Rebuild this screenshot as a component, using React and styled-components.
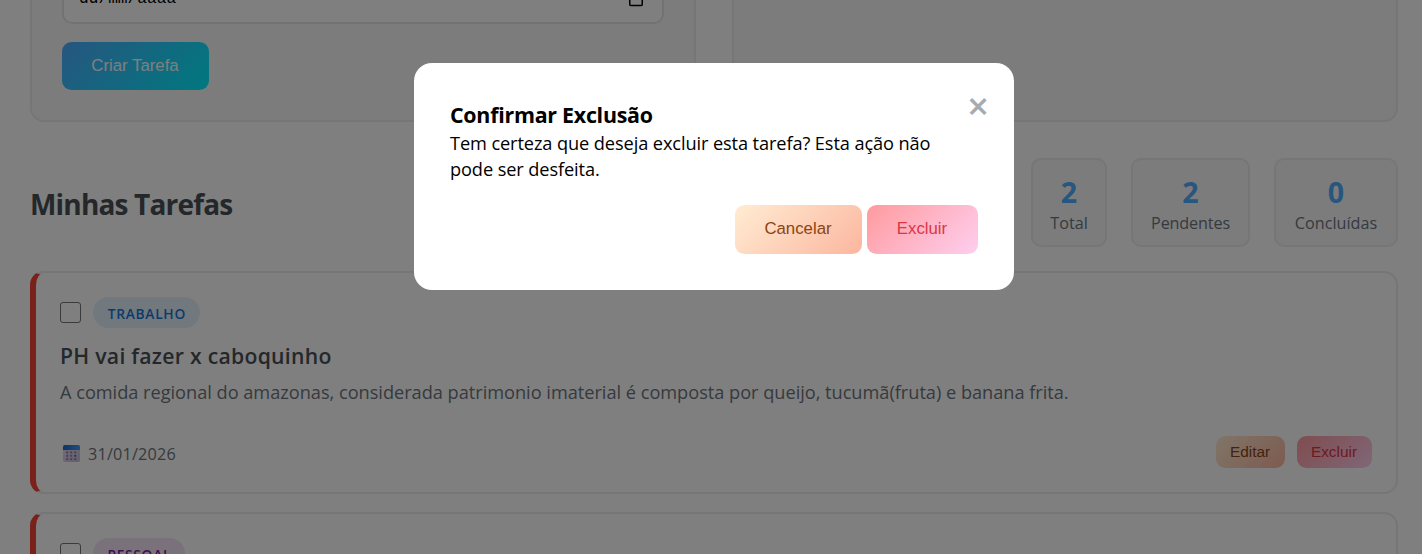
import React from "react";
import styled, { createGlobalStyle } from "styled-components";

const GlobalStyle = createGlobalStyle`
  * { box-sizing: border-box; }
  html, body { margin: 0; padding: 0; background: #fff; overflow: hidden; }
  body { font-family: "Open Sans", "Noto Sans", sans-serif; color: #000; }
  h2, h3, p { margin: 0; }
`;

const Page = styled.div`
  height: 554px;
  padding: 0 24px 0 30px;
  overflow: hidden;
  background: #fff;
`;

const Panels = styled.div`
  display: grid;
  grid-template-columns: 1fr 1fr;
  gap: 36px;
  width: 1368px;
  height: 182px;
  margin-top: -60px;
`;

const Panel = styled.section`
  display: flex;
  flex-direction: column;
  align-items: flex-start;
  justify-content: flex-end;
  gap: 18px;
  padding: 30px;
  border: 2px solid #e9ecef;
  border-radius: 14px;
  background: #f8f9fa;
`;

const DateField = styled.div`
  display: flex;
  align-items: center;
  justify-content: space-between;
  width: 602px;
  height: 51px;
  padding: 0 18px 0 15px;
  border: 2px solid #e1e5e9;
  border-radius: 10px;
  background: #fff;
  font: 16.2px/20px "Liberation Mono", monospace;
`;

const variants = {
  primary: { bg: "linear-gradient(135deg, #4facfe 0%, #00f2fe 100%)", fg: "#fff" },
  warm: { bg: "linear-gradient(135deg, #ffecd2 0%, #fcb69f 100%)", fg: "#8b4513" },
  danger: { bg: "linear-gradient(135deg, #ff9a9e 0%, #fecfef 100%)", fg: "#dc3545" },
};

const Button = styled.button`
  width: ${(p) => p.$w}px;
  height: ${(p) => (p.$small ? 32 : p.$h || 49)}px;
  padding: 0 1px ${(p) => (p.$small || p.$h ? 0 : 2)}px 0;
  border: 0;
  border-radius: 9.6px;
  background: ${(p) => variants[p.$variant].bg};
  color: ${(p) => variants[p.$variant].fg};
  font: 400 ${(p) => (p.$small ? 15.4 : 16.8)}px/20px "Liberation Sans", Arial, sans-serif;
`;

const SectionHead = styled.header`
  display: flex;
  align-items: center;
  justify-content: space-between;
  width: 1368px;
  margin: 36px 0 24px;
`;

const SectionTitle = styled.h2`
  font-size: 28px;
  line-height: 40px;
  font-weight: 700;
  letter-spacing: -0.82px;
  color: #495057;
  padding-top: 2px;
`;

const Stats = styled.div`
  display: flex;
  gap: 24px;
`;

const Stat = styled.div`
  width: ${(p) => p.$w}px;
  height: 89px;
  padding-top: 15px;
  border: 2px solid #e9ecef;
  border-radius: 10px;
  background: #f8f9fa;
  text-align: center;
`;

const StatValue = styled.div`
  font-size: 28.6px;
  line-height: 34px;
  font-weight: 700;
  color: #4facfe;
`;

const StatLabel = styled.div`
  font-size: 16.2px;
  line-height: 29px;
  color: #6c757d;
  letter-spacing: ${(p) => p.$ls || 0}px;
`;

const Task = styled.article`
  width: 1368px;
  height: 223px;
  margin-bottom: 18px;
  padding: 24px 24px 24px 24px;
  border: 2px solid #e9ecef;
  border-left: 6px solid #f44336;
  border-radius: 14px;
  background: #fff;
`;

const TaskTop = styled.div`
  display: flex;
  align-items: center;
  gap: 12px;
  height: 31px;
`;

const Check = styled.span`
  width: 21px;
  height: 21px;
  border: 1px solid #767676;
  border-radius: 3px;
  background: #fff;
`;

const Tag = styled.span`
  width: ${(p) => p.$w}px;
  height: 31px;
  border-radius: 16px;
  background: ${(p) => p.$bg};
  color: ${(p) => p.$fg};
  font-size: 13.8px;
  line-height: 33px;
  font-weight: 600;
  letter-spacing: 0.7px;
  text-indent: 0.7px;
  text-align: center;
`;

const TaskTitle = styled.h3`
  margin-top: 11px;
  font-size: 21.2px;
  line-height: 34px;
  font-weight: 600;
  letter-spacing: 0.27px;
  color: #495057;
`;

const TaskText = styled.p`
  padding-top: 2px;
  font-size: 18.2px;
  line-height: 34px;
  letter-spacing: -0.02px;
  color: #6c757d;
`;

const TaskFoot = styled.div`
  display: flex;
  align-items: center;
  justify-content: space-between;
  height: 32px;
  margin-top: 27px;
`;

const Due = styled.div`
  display: flex;
  align-items: center;
  gap: 8px;
  padding: 3px 0 0 3px;
  color: #6c757d;
  font-size: 16.2px;
  line-height: 24px;
  letter-spacing: 0.2px;
`;

const Actions = styled.div`
  display: flex;
  gap: ${(p) => p.$gap}px;
  justify-content: flex-end;
`;

const Overlay = styled.div`
  position: fixed;
  inset: 0;
  display: flex;
  align-items: flex-start;
  justify-content: center;
  padding-top: 63px;
  background: rgba(0, 0, 0, 0.5);
`;

const Modal = styled.div`
  width: 600px;
  height: 227px;
  margin-left: 6px;
  padding: 36px;
  border-radius: 18px;
  background: #fff;
`;

const ModalHead = styled.div`
  display: flex;
  justify-content: space-between;
  height: 31px;
`;

const ModalTitle = styled.h3`
  font-size: 21.4px;
  line-height: 32px;
  font-weight: 700;
  letter-spacing: -0.26px;
`;

const Close = styled.span`
  width: 22px;
  margin-right: -11px;
  color: #aaa;
  font-size: 38px;
  line-height: 12px;
  font-weight: 600;
  text-align: center;
`;

const ModalText = styled.p`
  margin-bottom: 23px;
  font-size: 18.2px;
  line-height: 26px;
  letter-spacing: -0.1px;
`;

function PickerIcon() {
  return (
    <svg width="16" height="18" viewBox="0 0 16 18" fill="none" stroke="#000" strokeWidth="1.5">
      <rect x="1.75" y="3" width="12.5" height="12.5" rx="1" />
      <path d="M2 6h12M5 1v3M11 1v3" />
    </svg>
  );
}

function CalendarIcon() {
  return (
    <svg width="17" height="17" viewBox="0 0 17 17">
      <defs>
        <linearGradient id="calTop" x1="0" x2="1">
          <stop offset="0" stopColor="#2266cc" />
          <stop offset="1" stopColor="#39a0f5" />
        </linearGradient>
        <linearGradient id="calBody" x1="0" x2="1" y1="0" y2="1">
          <stop offset="0" stopColor="#e2dcee" />
          <stop offset="1" stopColor="#cbbbdc" />
        </linearGradient>
      </defs>
      <rect width="17" height="17" rx="2" fill="url(#calBody)" />
      <path d="M0 5V2A2 2 0 0 1 2 0h13A2 2 0 0 1 17 2V5z" fill="url(#calTop)" />
      <g fill="#8f84a8">
        {[4.2, 8.2, 12.2].map((x) =>
          [7.4, 10.8, 14.2].map((y) => (
            <circle key={x + "-" + y} cx={x} cy={y} r="1.15" fill={x > 12 && y > 10 && y < 11 ? "#1d83e8" : undefined} />
          ))
        )}
      </g>
    </svg>
  );
}

function TaskCard({ tag, title, text, date }) {
  return (
    <Task>
      <TaskTop>
        <Check />
        <Tag $w={tag.w} $bg={tag.bg} $fg={tag.fg}>{tag.name}</Tag>
      </TaskTop>
      {title && (
        <>
          <TaskTitle>{title}</TaskTitle>
          <TaskText>{text}</TaskText>
          <TaskFoot>
            <Due><CalendarIcon />{date}</Due>
            <Actions $gap={12}>
              <Button $small $w={69} $variant="warm">Editar</Button>
              <Button $small $w={75} $variant="danger">Excluir</Button>
            </Actions>
          </TaskFoot>
        </>
      )}
    </Task>
  );
}

export default function App() {
  return (
    <>
      <GlobalStyle />
      <Page>
        <Panels>
          <Panel>
            <DateField>dd/mm/aaaa<PickerIcon /></DateField>
            <Button $w={147} $h={48} $variant="primary">Criar Tarefa</Button>
          </Panel>
          <Panel />
        </Panels>
        <SectionHead>
          <SectionTitle>Minhas Tarefas</SectionTitle>
          <Stats>
            <Stat $w={76}><StatValue>2</StatValue><StatLabel>Total</StatLabel></Stat>
            <Stat $w={119}><StatValue>2</StatValue><StatLabel $ls={-0.15}>Pendentes</StatLabel></Stat>
            <Stat $w={124}><StatValue>0</StatValue><StatLabel>Concluídas</StatLabel></Stat>
          </Stats>
        </SectionHead>
        <TaskCard
          tag={{ name: "TRABALHO", w: 107, bg: "#e3f2fd", fg: "#1976d2" }}
          title="PH vai fazer x caboquinho"
          text="A comida regional do amazonas, considerada patrimonio imaterial é composta por queijo, tucumã(fruta) e banana frita."
          date="31/01/2026"
        />
        <TaskCard tag={{ name: "PESSOAL", w: 92, bg: "#f3e5f5", fg: "#7b1fa2" }} />
      </Page>
      <Overlay>
        <Modal>
          <ModalHead>
            <ModalTitle>Confirmar Exclusão</ModalTitle>
            <Close>×</Close>
          </ModalHead>
          <ModalText>
            Tem certeza que deseja excluir esta tarefa? Esta ação não<br />
            pode ser desfeita.
          </ModalText>
          <Actions $gap={5}>
            <Button $w={127} $variant="warm">Cancelar</Button>
            <Button $w={111} $variant="danger">Excluir</Button>
          </Actions>
        </Modal>
      </Overlay>
    </>
  );
}
